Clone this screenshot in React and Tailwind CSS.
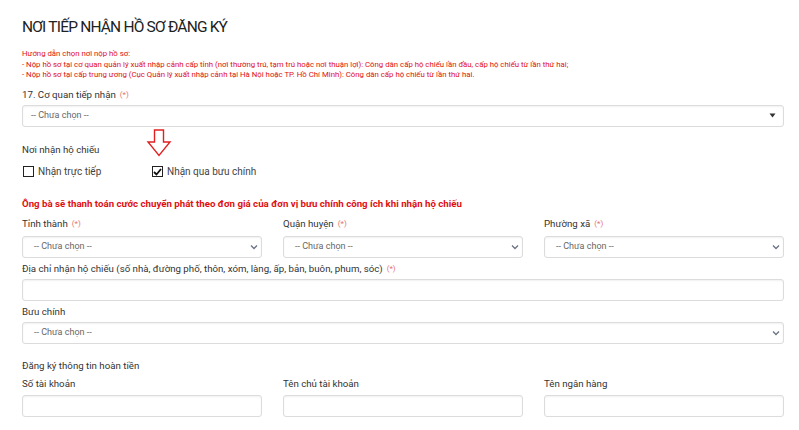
import React from "react";

const Chevron = () => (
  <svg width="8" height="6" viewBox="0 0 8 6" className="text-gray-500">
    <path d="M1 1.5 L4 4.5 L7 1.5" fill="none" stroke="currentColor" strokeWidth="1.3" />
  </svg>
);

const Req = () => <span className="text-[#e57373] text-[8px] ml-1 align-top">(*)</span>;

const Select = ({ caret = false }) => (
  <div className={caret
    ? "h-[22px] border border-[#dcdcdc] rounded-[3px] shadow-[inset_0_1px_2px_rgba(0,0,0,0.06)] bg-white flex items-center justify-between pl-[8px] pr-[7px]"
    : "h-[22px] border border-[#dcdcdc] rounded-[3px] shadow-[inset_0_1px_2px_rgba(0,0,0,0.06)] bg-white flex items-center justify-between pl-[11px] pr-[3px]"}>
    <span className="text-[9px] text-[#666]">-- Chưa chọn --</span>
    {caret ? (
      <svg width="7" height="5" viewBox="0 0 7 5"><path d="M0.5 0.5 L6.5 0.5 L3.5 4.5 Z" fill="#333" /></svg>
    ) : (
      <Chevron />
    )}
  </div>
);

const Input = () => (
  <div className="h-[22px] border border-[#dcdcdc] rounded-[3px] shadow-[inset_0_1px_2px_rgba(0,0,0,0.06)] bg-white" />
);

const Label = ({ children, req }) => (
  <div className="text-[9.7px] text-[#333] leading-[12px] h-[12px]">
    {children}
    {req && <Req />}
  </div>
);

export default function App() {
  return (
    <div className="w-[799px] h-[430px] bg-white overflow-hidden pl-[22px] pr-[15px] relative" style={{ fontFamily: "Roboto, 'Liberation Sans', sans-serif" }}>
      <h1 className="text-[15.5px] text-[#222] pt-[17px] leading-[20px] tracking-[-0.8px]">NƠI TIẾP NHẬN HỒ SƠ ĐĂNG KÝ</h1>
      <div className="mt-[12px] text-[7.8px] leading-[10.5px] text-[#e01010]">
        <div>Hướng dẫn chọn nơi nộp hồ sơ:</div>
        <div>- Nộp hồ sơ tại cơ quan quản lý xuất nhập cảnh cấp tỉnh (nơi thường trú, tạm trú hoặc nơi thuận lợi): Công dân cấp hộ chiếu lần đầu, cấp hộ chiếu từ lần thứ hai;</div>
        <div>- Nộp hồ sơ tại cấp trung ương (Cục Quản lý xuất nhập cảnh tại Hà Nội hoặc TP. Hồ Chí Minh): Công dân cấp hộ chiếu từ lần thứ hai.</div>
      </div>
      <div className="mt-[8px]">
        <Label req>17. Cơ quan tiếp nhận</Label>
      </div>
      <div className="mt-[4px]">
        <Select caret />
      </div>
      <div className="mt-[17px]">
        <Label>Nơi nhận hộ chiếu</Label>
      </div>
      <div className="mt-[10px] flex items-center h-[12px] text-[10px] text-[#444]">
        <div className="flex items-center w-[130px]">
          <span className="w-[11px] h-[11px] border-[1.5px] border-[#222] bg-white ml-[1px]" />
          <span className="ml-[4px]">Nhận trực tiếp</span>
        </div>
        <div className="flex items-center">
          <span className="w-[11px] h-[11px] border-[1.5px] border-[#222] bg-white flex items-center justify-center">
            <svg width="9" height="8" viewBox="0 0 9 8"><path d="M1 4 L3.5 6.5 L8 1" fill="none" stroke="#111" strokeWidth="1.8" /></svg>
          </span>
          <span className="ml-[4px]">Nhận qua bưu chính</span>
        </div>
      </div>
      <svg className="absolute left-[146px] top-[129px]" width="26" height="28" viewBox="0 0 26 28">
        <path d="M8.5 1 L17.5 1 L17.5 13 L24 13 L13 26.5 L2 13 L8.5 13 Z" fill="white" stroke="#e02020" strokeWidth="1.4" strokeLinejoin="miter" />
      </svg>
      <div className="mt-[20px] text-[9.7px] font-bold text-[#e01010] leading-[12px]">
        Ông bà sẽ thanh toán cước chuyển phát theo đơn giá của đơn vị bưu chính công ích khi nhận hộ chiếu
      </div>
      <div className="mt-[8px] grid grid-cols-3 gap-x-[21px]">
        <div>
          <Label req>Tỉnh thành</Label>
          <div className="mt-[6px]"><Select /></div>
        </div>
        <div>
          <Label req>Quận huyện</Label>
          <div className="mt-[6px]"><Select /></div>
        </div>
        <div>
          <Label req>Phường xã</Label>
          <div className="mt-[6px]"><Select /></div>
        </div>
      </div>
      <div className="mt-[5px]">
        <Label req>Địa chỉ nhận hộ chiếu (số nhà, đường phố, thôn, xóm, làng, ấp, bản, buôn, phum, sóc)</Label>
      </div>
      <div className="mt-[4px]"><Input /></div>
      <div className="mt-[5px]">
        <Label>Bưu chính</Label>
      </div>
      <div className="mt-[4px]"><Select /></div>
      <div className="mt-[16px]">
        <Label>Đăng ký thông tin hoàn tiền</Label>
      </div>
      <div className="mt-[6px] grid grid-cols-3 gap-x-[21px]">
        <div>
          <Label>Số tài khoản</Label>
          <div className="mt-[5px]"><Input /></div>
        </div>
        <div>
          <Label>Tên chủ tài khoản</Label>
          <div className="mt-[5px]"><Input /></div>
        </div>
        <div>
          <Label>Tên ngân hàng</Label>
          <div className="mt-[5px]"><Input /></div>
        </div>
      </div>
    </div>
  );
}
